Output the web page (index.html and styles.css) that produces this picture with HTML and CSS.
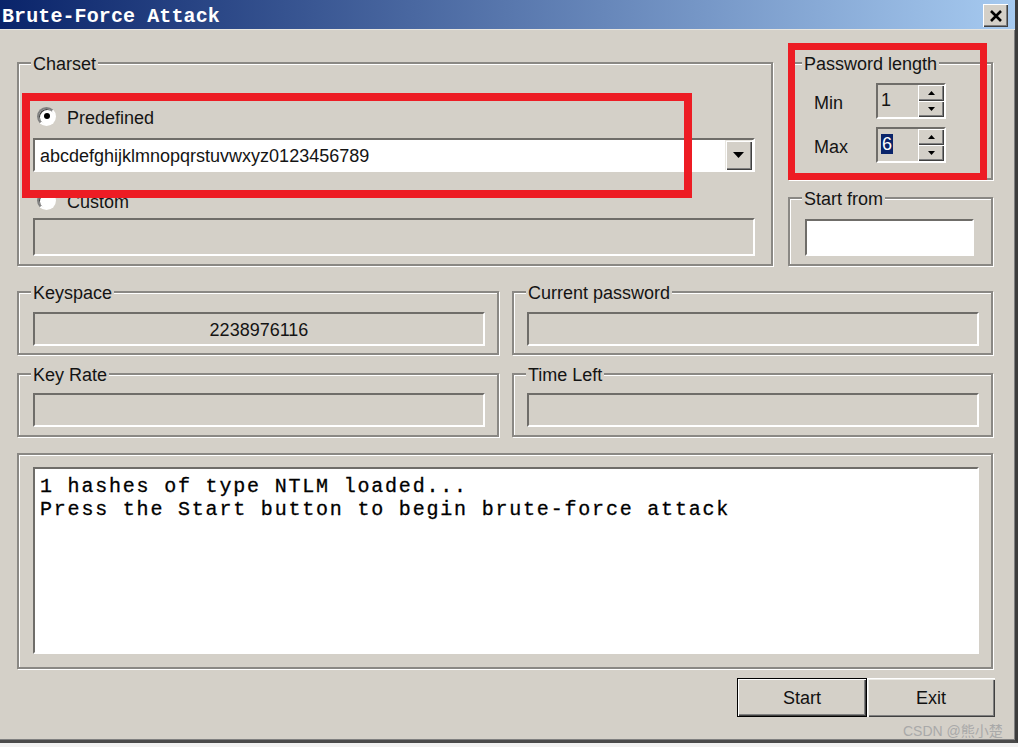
FILE: index.html
```html
<!DOCTYPE html>
<html>
<head>
<meta charset="utf-8">
<title>Brute-Force Attack</title>
<link rel="stylesheet" href="styles.css">
</head>
<body>
<div class="window">
  <div class="titlebar">
    <span class="title">Brute-Force Attack</span>
    <span class="close-btn"><svg width="14" height="12" viewBox="0 0 14 12"><path d="M2 1 L12 11 M12 1 L2 11" stroke="#000" stroke-width="2.6" fill="none"/></svg></span>
  </div>
  <div class="client">
    <div class="row row-top">
      <div class="group charset">
        <span class="legend">Charset</span>
        <div class="radio-row radio-first"><span class="radio checked"></span><span class="radio-text">Predefined</span></div>
        <div class="combo">
          <span class="combo-text">abcdefghijklmnopqrstuvwxyz0123456789</span>
          <span class="combo-btn"><svg width="11" height="6" viewBox="0 0 11 6"><path d="M0 0 H11 L5.5 6 Z" fill="#000"/></svg></span>
        </div>
        <div class="radio-row radio-second"><span class="radio"></span><span class="radio-text">Custom</span></div>
        <div class="field custom-field"></div>
      </div>
      <div class="rightcol">
        <div class="group pwlen">
          <span class="legend">Password length</span>
          <div class="spin-row spin-first">
            <span class="spin-label">Min</span>
            <div class="spin">
              <span class="spin-val">1</span>
              <div class="spin-btns">
                <span class="spin-btn"><svg width="7" height="4" viewBox="0 0 7 4"><path d="M3.5 0 L7 4 H0 Z" fill="#000"/></svg></span>
                <span class="spin-btn"><svg width="7" height="4" viewBox="0 0 7 4"><path d="M0 0 H7 L3.5 4 Z" fill="#000"/></svg></span>
              </div>
            </div>
          </div>
          <div class="spin-row spin-second">
            <span class="spin-label">Max</span>
            <div class="spin">
              <span class="spin-val"><span class="sel">6</span></span>
              <div class="spin-btns">
                <span class="spin-btn"><svg width="7" height="4" viewBox="0 0 7 4"><path d="M3.5 0 L7 4 H0 Z" fill="#000"/></svg></span>
                <span class="spin-btn"><svg width="7" height="4" viewBox="0 0 7 4"><path d="M0 0 H7 L3.5 4 Z" fill="#000"/></svg></span>
              </div>
            </div>
          </div>
        </div>
        <div class="group startfrom">
          <span class="legend">Start from</span>
          <div class="field white sf-field"></div>
        </div>
      </div>
    </div>
    <div class="row row-mid">
      <div class="group stat keyspace">
        <span class="legend">Keyspace</span>
        <div class="field stat-field">2238976116</div>
      </div>
      <div class="group stat current">
        <span class="legend">Current password</span>
        <div class="field stat-field"></div>
      </div>
    </div>
    <div class="row row-mid2">
      <div class="group stat keyrate">
        <span class="legend">Key Rate</span>
        <div class="field stat-field"></div>
      </div>
      <div class="group stat timeleft">
        <span class="legend">Time Left</span>
        <div class="field stat-field"></div>
      </div>
    </div>
    <div class="group log">
      <div class="field white log-field">
        <div class="log-line">1 hashes of type NTLM loaded...</div>
        <div class="log-line">Press the Start button to begin brute-force attack</div>
      </div>
    </div>
    <div class="buttons">
      <span class="btn btn-default">Start</span>
      <span class="btn btn-exit">Exit</span>
    </div>
  </div>
</div>
<div class="mark mark-charset"></div>
<div class="mark mark-length"></div>
<div class="watermark">CSDN @熊小楚</div>
</body>
</html>
```
FILE: styles.css
```css
* { box-sizing: border-box; }
html, body { margin: 0; padding: 0; }
body {
  width: 1018px;
  height: 747px;
  overflow: hidden;
  position: relative;
  background: #f1f1f1;
  font-family: "Liberation Sans", Arial, sans-serif;
  font-size: 18px;
  color: #141414;
}
.window {
  width: 1018px;
  height: 743px;
  background: #d4d0c8;
  border-right: 3px solid #3c3c3c;
  border-bottom: 3px solid #4a4a4a;
  box-shadow: inset -1px -1px 0 #808080;
  display: flex;
  flex-direction: column;
}
.titlebar {
  height: 30px;
  flex: none;
  background: linear-gradient(to right, #0a246a 0%, #a6caf0 100%);
  display: flex;
  align-items: center;
  justify-content: space-between;
  padding: 0 7px 0 2px;
  border-bottom: 1px solid #e8e6e0;
}
.title {
  font-family: "Liberation Mono", "Courier New", monospace;
  font-weight: bold;
  font-size: 20px;
  letter-spacing: 0.1px;
  color: #fff;
  line-height: 20px;
  margin-top: 4px;
}
.close-btn {
  width: 25px;
  height: 23px;
  margin-top: 2px;
  background: #d4d0c8;
  box-shadow: inset 1px 1px 0 #fff, inset -1px -1px 0 #404040, inset -2px -2px 0 #808080;
  display: flex;
  align-items: center;
  justify-content: center;
}
.client {
  flex: 1;
  padding: 32px 22px 0 17px;
  display: flex;
  flex-direction: column;
}
.row { display: flex; }
.row-top { gap: 15px; }
.row-mid { margin-top: 25px; gap: 13px; }
.row-mid2 { margin-top: 18px; gap: 13px; }

.group {
  border: 2px solid #8a8884;
  box-shadow: inset 1px 1px 0 #fff, 1px 1px 0 #fff;
  display: flex;
  flex-direction: column;
}
.legend {
  display: block;
  align-self: flex-start;
  height: 20px;
  line-height: 24px;
  margin: -12px 0 0 -2px;
  padding: 0 2px;
  background: #d4d0c8;
  white-space: nowrap;
}

.field {
  border: 2px solid;
  border-color: #6f6d69 #ffffff #ffffff #6f6d69;
  background: #d4d0c8;
}
.field.white { background: #fff; }

/* Charset */
.charset {
  width: 756px;
  padding: 0 16px 8px 14px;
}
.radio-row {
  height: 20px;
  display: flex;
  align-items: center;
}
.radio-text {
  line-height: 20px;
  padding-top: 3px;
}
.radio-first { margin-top: 34px; }
.radio-second { margin-top: 18px; }
.radio {
  width: 19px;
  height: 19px;
  margin: 0 11px 0 4px;
  border-radius: 50%;
  border: 2px solid;
  border-color: #808080 #fff #fff #808080;
  box-shadow: inset 1px 1px 0 #404040;
  background: #fff;
  display: flex;
  align-items: center;
  justify-content: center;
}
.radio.checked::after {
  content: "";
  width: 6px;
  height: 6px;
  border-radius: 50%;
  background: #000;
}
.combo {
  margin-top: 12px;
  height: 34px;
  border: 2px solid;
  border-color: #6f6d69 #fff #fff #6f6d69;
  background: #fff;
  display: flex;
  align-items: center;
  padding-right: 1px;
}
.combo-text {
  flex: 1;
  padding-left: 5px;
  padding-top: 2px;
  line-height: 28px;
  white-space: nowrap;
}
.combo-btn {
  width: 27px;
  height: 30px;
  background: #d4d0c8;
  box-shadow: inset 1px 1px 0 #e8e6e0, inset 2px 2px 0 #fff, inset -1px -1px 0 #404040, inset -2px -2px 0 #808080;
  display: flex;
  align-items: center;
  justify-content: center;
}
.custom-field {
  margin-top: 8px;
  height: 38px;
}

/* Right column */
.rightcol {
  width: 205px;
  display: flex;
  flex-direction: column;
  gap: 17px;
}
.pwlen {
  padding: 0 10px 15px 24px;
}
.pwlen .legend { margin-left: -12px; }
.spin-row {
  display: flex;
  align-items: center;
}
.spin-first { margin-top: 11px; }
.spin-second { margin-top: 8px; }
.spin-label {
  width: 62px;
  padding-top: 5px;
}
.spin-val {
  flex: 1;
  padding-left: 3px;
  padding-top: 1px;
  line-height: 28px;
}
.spin {
  width: 70px;
  height: 36px;
  border: 2px solid;
  border-color: #6f6d69 #fff #fff #6f6d69;
  background: #d4d0c8;
  display: flex;
}
.sel {
  background: #0a246a;
  color: #fff;
  padding: 0 1px;
}
.spin-btns {
  width: 26px;
  display: flex;
  flex-direction: column;
}
.spin-btn {
  flex: 1;
  background: #d4d0c8;
  box-shadow: inset 1px 1px 0 #fff, inset -1px -1px 0 #404040, inset -2px -2px 0 #808080;
  display: flex;
  align-items: center;
  justify-content: center;
}
.startfrom {
  padding: 0 17px 8px 15px;
}
.startfrom .legend { margin-left: -3px; }
.sf-field {
  margin-top: 12px;
  height: 37px;
}

/* Stat rows */
.stat { padding: 0 12px 0 14px; }
.keyspace, .keyrate { width: 482px; }
.current, .timeleft { width: 481px; padding-left: 13px; }
.current .legend, .timeleft .legend { margin-left: -1px; }
.row-mid .stat { padding-bottom: 7px; }
.row-mid .stat-field { margin-top: 11px; }
.row-mid2 .stat { padding-bottom: 8px; }
.row-mid2 .stat-field { margin-top: 10px; }
.stat-field {
  height: 34px;
  line-height: 28px;
  padding-top: 2px;
  text-align: center;
}

/* Log */
.log {
  margin-top: 16px;
  padding: 12px 12px 13px 14px;
}
.log-field {
  height: 187px;
  padding: 6px 5px 0;
  font-family: "Liberation Mono", "Courier New", monospace;
  font-size: 20px;
  letter-spacing: 1.8px;
  color: #000;
}
.log-line {
  height: 23px;
  line-height: 23px;
  white-space: pre;
  -webkit-text-stroke: 0.3px #000;
}

/* Buttons */
.buttons {
  margin-top: 9px;
  margin-right: -2px;
  display: flex;
  justify-content: flex-end;
}
.btn {
  height: 39px;
  display: flex;
  align-items: center;
  justify-content: center;
  padding-top: 2px;
  background: #d4d0c8;
  color: #111;
}
.btn-default {
  width: 130px;
  border: 1px solid #000;
  box-shadow: inset 1px 1px 0 #fff, inset -1px -1px 0 #404040, inset -2px -2px 0 #808080;
}
.btn-exit {
  width: 128px;
  box-shadow: inset 1px 1px 0 #fff, inset 2px 2px 0 #ecebe6, inset -1px -1px 0 #404040, inset -2px -2px 0 #808080;
}

/* Annotation overlays */
.mark {
  position: absolute;
  border: 8px solid #ed1c24;
}
.mark-charset {
  left: 22px;
  top: 93px;
  width: 670px;
  height: 105px;
}
.mark-length {
  left: 788px;
  top: 43px;
  width: 199px;
  height: 137px;
  border-width: 7px;
}
.watermark {
  position: absolute;
  left: 903px;
  top: 721px;
  font-family: "Liberation Sans", "Noto Sans CJK SC", sans-serif;
  font-size: 14px;
  line-height: 20px;
  color: #a9a9a9;
}
```
